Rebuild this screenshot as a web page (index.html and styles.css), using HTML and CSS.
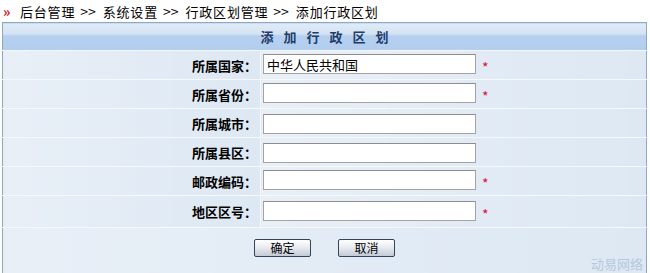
FILE: index.html
```html
<!DOCTYPE html>
<html lang="zh-CN">
<head>
<meta charset="UTF-8">
<title>添加行政区划</title>
<link rel="stylesheet" href="styles.css">
</head>
<body>

<div class="crumb">
  <span class="crumb-icon">&raquo;</span>后台管理<span class="sep">&gt;&gt;</span>系统设置<span class="sep">&gt;&gt;</span>行政区划管理<span class="sep">&gt;&gt;</span>添加行政区划
</div>

<div class="panel">
  <table class="form-table">
    <tr>
      <th colspan="2" class="title">添加行政区划</th>
    </tr>
    <tr>
      <td class="label">所属国家：</td>
      <td class="field"><input type="text" class="box" value="中华人民共和国"><span class="req">*</span></td>
    </tr>
    <tr>
      <td class="label">所属省份：</td>
      <td class="field"><input type="text" class="box"><span class="req">*</span></td>
    </tr>
    <tr>
      <td class="label">所属城市：</td>
      <td class="field"><input type="text" class="box"></td>
    </tr>
    <tr>
      <td class="label">所属县区：</td>
      <td class="field"><input type="text" class="box"></td>
    </tr>
    <tr>
      <td class="label">邮政编码：</td>
      <td class="field"><input type="text" class="box"><span class="req">*</span></td>
    </tr>
    <tr class="last">
      <td class="label">地区区号：</td>
      <td class="field"><input type="text" class="box"><span class="req">*</span></td>
    </tr>
    <tr>
      <td colspan="2" class="buttons">
        <button class="btn">确定</button>
        <button class="btn">取消</button>
      </td>
    </tr>
  </table>
  <div class="mark">动易网络</div>
</div>

</body>
</html>
```

FILE: styles.css
```css
body {
  margin: 0;
  background: #fff;
  font-family: "Noto Sans CJK SC", "Liberation Sans", sans-serif;
  font-size: 13px;
  color: #000;
}
.crumb {
  height: 22px;
  line-height: 22px;
  padding-left: 3px;
  white-space: nowrap;
  letter-spacing: 0.8px;
}
.crumb-icon {
  display: inline-block;
  width: 17px;
  color: #d0102a;
  font-weight: bold;
  font-size: 14px;
}
.sep {
  display: inline-block;
  margin: 0 7px 0 5px;
  font-size: 14px;
  letter-spacing: 0;
}
.panel {
  position: relative;
  margin: 0 3px 0 2px;
}
.form-table {
  width: 645px;
  border-collapse: collapse;
  border: 1px solid #8ea9c6;
}
.form-table td {
  padding: 0;
  background: linear-gradient(to right, #e8eff7, #dde8f3);
  border-top: 1px solid #f5f8fc;
}
.title {
  height: 27px;
  padding: 0;
  background: linear-gradient(to bottom, #e1ebf6 0%, #d3e2f3 40%, #b5d0ef 45%, #b2cdee 100%);
  color: #1f3d6b;
  font-weight: bold;
  font-size: 13px;
  letter-spacing: 10px;
  text-indent: 10px;
  text-align: center;
}
.label {
  width: 254px;
  height: 28px;
  padding-right: 3px !important;
  text-align: right;
  font-weight: bold;
  border-right: 1px solid #f5f8fc;
}
.last td {
  height: 31px;
}
.field {
  padding-left: 2px !important;
}
.box {
  width: 205px;
  height: 16px;
  margin: 0;
  padding: 1px 3px;
  border: 1px solid #a3a3a3;
  border-top-color: #8d8d8d;
  background: #fff;
  font-family: inherit;
  font-size: 13px;
  vertical-align: middle;
}
.req {
  margin-left: 6px;
  color: #d8102e;
  font-size: 14px;
  vertical-align: -5px;
}
.buttons {
  height: 46px;
  text-align: center;
  vertical-align: top;
}
.buttons .btn {
  margin-top: 11px;
}
.btn {
  width: 57px;
  height: 18px;
  margin: 0 12px;
  padding: 0;
  border: 1px solid #33455a;
  border-radius: 2px;
  background: linear-gradient(to bottom, #ffffff, #e6e9ee 50%, #c3cad6);
  font-family: inherit;
  font-size: 12px;
  line-height: 16px;
  color: #000;
}
.mark {
  position: absolute;
  right: 4px;
  bottom: 2px;
  font-size: 13px;
  color: #b5c8dc;
}
```
